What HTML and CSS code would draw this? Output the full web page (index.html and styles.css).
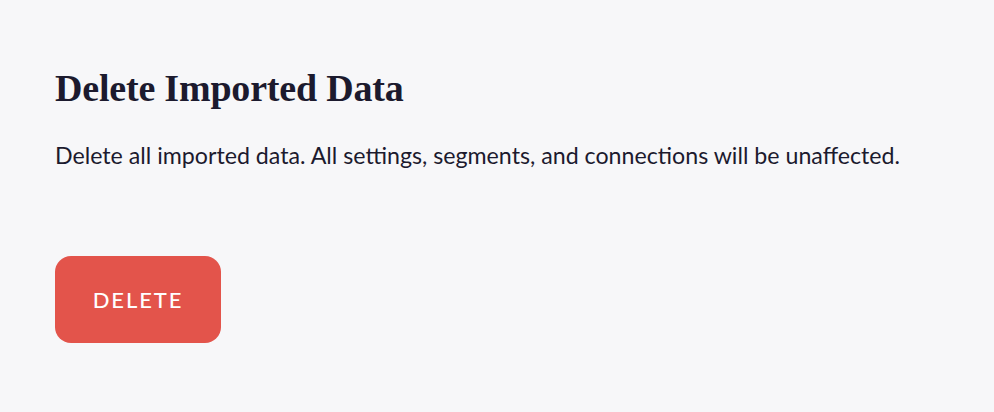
FILE: index.html
```html
<!DOCTYPE html>
<html lang="en">
<head>
  <meta charset="UTF-8" />
  <meta name="viewport" content="width=device-width, initial-scale=1.0" />
  <title>Delete Imported Data</title>
  <link rel="stylesheet" href="styles.css">
</head>
<body>
  <div class="section">
    <h2 class="title">Delete Imported Data</h2>
    <p class="desc">Delete all imported data. All settings, segments, and connections will be unaffected.</p>
    <button class="delete-btn">DELETE</button>
  </div>
</body>
</html>
```

FILE: styles.css
```css
body {
  margin: 0;
  padding: 0;
  background-color: #f7f7f9;
  color: #1c1a2e;
  font-family: Lato, sans-serif;
}

.section {
  padding: 66px 55px;
  display: flex;
  flex-direction: column;
  align-items: flex-start;
}

.title {
  margin: 0;
  font-family: "Liberation Serif", serif;
  font-weight: bold;
  font-size: 38px;
  line-height: 44px;
  letter-spacing: -0.2px;
}

.desc {
  margin: 29px 0 0;
  font-size: 23.2px;
  line-height: 32px;
}

.delete-btn {
  margin-top: 85px;
  width: 166px;
  height: 87px;
  border: none;
  border-radius: 16px;
  background: #e3544b;
  color: #fff;
  font-family: Lato, sans-serif;
  font-size: 22px;
  font-weight: 500;
  letter-spacing: 1.9px;
  cursor: pointer;
}
```
